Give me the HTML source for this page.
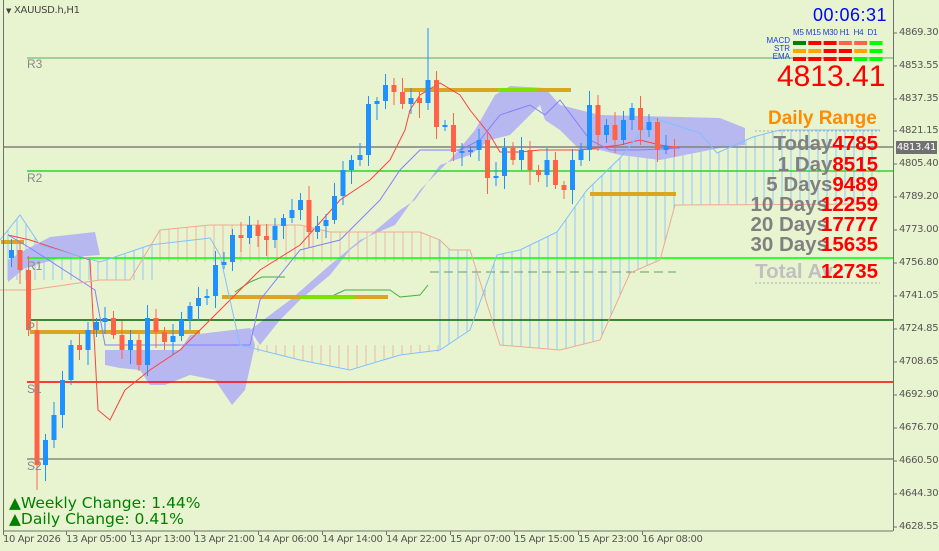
<!DOCTYPE html>
<html><head><meta charset="utf-8"><style>
html,body{margin:0;padding:0;background:#e8f4d0;}
#w{position:relative;width:939px;height:551px;overflow:hidden;background:#e8f4d0;font-family:"Liberation Sans",sans-serif;}
.t{position:absolute;white-space:nowrap;}
.ax{position:absolute;left:899px;font-size:10px;color:#555;font-family:"DejaVu Sans",sans-serif;letter-spacing:-0.3px}
.dt{position:absolute;top:534px;font-size:10px;color:#555;font-family:"DejaVu Sans",sans-serif;letter-spacing:-0.4px}
.dr{position:absolute;right:61px;font-weight:bold;font-size:20.5px;white-space:nowrap;}
.dr .g{color:#808080}.dr .r{color:#ff0000}
</style></head><body><div id="w">
<svg id="s" width="939" height="551" style="position:absolute;left:0;top:0">
</svg>
<div class="t" style="left:6px;top:5px;font-size:10px;color:#444;font-family:'DejaVu Sans',sans-serif;letter-spacing:-0.3px"><span style="font-size:7px">&#9660;</span> XAUUSD.h,H1</div>
<div class="t" style="left:27px;top:57px;font-size:12px;color:#888">R3</div>
<div class="t" style="left:27px;top:171px;font-size:12px;color:#888">R2</div>
<div class="t" style="left:27px;top:259px;font-size:12px;color:#888">R1</div>
<div class="t" style="left:27px;top:320px;font-size:12px;color:#888">P</div>
<div class="t" style="left:27px;top:382px;font-size:12px;color:#888">S1</div>
<div class="t" style="left:27px;top:459px;font-size:12px;color:#888">S2</div>
<div class="t" style="left:813px;top:5px;font-size:18px;color:#0000ff;letter-spacing:0.5px">00:06:31</div>
<div class="t" style="left:793px;top:28px;font-size:8px;color:#2040d0;letter-spacing:-0.2px">M5 M15 M30 H1 &nbsp;H4 &nbsp;D1</div>
<div class="t" style="left:762px;top:37px;font-size:8px;color:#2040d0;line-height:8px;text-align:right;width:28px">MACD<br>STR<br>EMA</div>
<div class="t" style="left:777px;top:60px;font-size:30px;color:#ff0000">4813.41</div>
<div class="t" style="left:768px;top:108px;font-size:19px;font-weight:bold;color:#ff8c00">Daily Range</div>
<div class="dr" style="top:132px"><span class="g">Today</span><span class="r">4785</span></div>
<div class="dr" style="top:153px"><span class="g">1 Day</span><span class="r">8515</span></div>
<div class="dr" style="top:173px"><span class="g">5 Days</span><span class="r">9489</span></div>
<div class="dr" style="top:193px"><span class="g">10 Days</span><span class="r" style="margin-left:-7px">12259</span></div>
<div class="dr" style="top:213px"><span class="g">20 Days</span><span class="r" style="margin-left:-7px">17777</span></div>
<div class="dr" style="top:233px"><span class="g">30 Days</span><span class="r" style="margin-left:-7px">15635</span></div>
<div class="dr" style="top:260px"><span style="color:#c0c0c0">Total Av</span><span class="r" style="margin-left:-12px">12735</span></div>
<div class="t" style="left:9px;top:495px;font-size:15.5px;color:#008000;font-family:'DejaVu Sans',sans-serif;line-height:16px">&#9650;Weekly Change: 1.44%<br>&#9650;Daily Change: 0.41%</div>
<div class="ax" style="top:27px">4869.30</div><div class="ax" style="top:60px">4853.55</div><div class="ax" style="top:93px">4837.35</div><div class="ax" style="top:125px">4821.15</div><div class="ax" style="top:158px">4805.40</div><div class="ax" style="top:191px">4789.20</div><div class="ax" style="top:224px">4773.00</div><div class="ax" style="top:257px">4756.80</div><div class="ax" style="top:290px">4741.05</div><div class="ax" style="top:323px">4724.85</div><div class="ax" style="top:356px">4708.65</div><div class="ax" style="top:389px">4692.90</div><div class="ax" style="top:422px">4676.70</div><div class="ax" style="top:455px">4660.50</div><div class="ax" style="top:488px">4644.30</div><div class="ax" style="top:521px">4628.55</div>
<div class="t" style="left:896px;top:141px;width:41px;height:13px;background:#707070;color:#fff;font-size:10px;font-family:'DejaVu Sans',sans-serif;line-height:13px;text-align:center;letter-spacing:-0.3px">4813.41</div>
<div class="dt" style="left:3px">10 Apr 2026</div><div class="dt" style="left:66px">13 Apr 05:00</div><div class="dt" style="left:130px">13 Apr 13:00</div><div class="dt" style="left:194px">13 Apr 21:00</div><div class="dt" style="left:258px">14 Apr 06:00</div><div class="dt" style="left:322px">14 Apr 14:00</div><div class="dt" style="left:386px">14 Apr 22:00</div><div class="dt" style="left:450px">15 Apr 07:00</div><div class="dt" style="left:514px">15 Apr 15:00</div><div class="dt" style="left:578px">15 Apr 23:00</div><div class="dt" style="left:642px">16 Apr 08:00</div>
</div>
<script>
var s=document.getElementById('s'),h='';
function L(x1,y1,x2,y2,c,w,d){h+='<line x1="'+x1+'" y1="'+y1+'" x2="'+x2+'" y2="'+y2+'" stroke="'+c+'" stroke-width="'+(w||1)+'"'+(d?' stroke-dasharray="'+d+'"':'')+'/>';}
function P(pts,c,w){h+='<polyline fill="none" stroke="'+c+'" stroke-width="'+(w||1)+'" points="'+pts+'"/>';}
function G(pts,c){h+='<polygon fill="'+c+'" points="'+pts+'"/>';}
function hatch(x1,x2,step,top,bot,c){for(var x=x1;x<=x2;x+=step){L(x,top(x),x,bot(x),c);}}
function interp(arr){return function(x){for(var i=0;i<arr.length-1;i++){if(x>=arr[i][0]&&x<=arr[i+1][0]){var t=(x-arr[i][0])/(arr[i+1][0]-arr[i][0]);return arr[i][1]+t*(arr[i+1][1]-arr[i][1]);}}return arr[arr.length-1][1];};}
var lb=[[0,240],[20,215],[40,245],[100,262],[150,245],[210,238],[220,255],[240,345],[300,360],[350,370],[400,355],[440,350],[470,330],[497,255],[520,250],[557,232],[587,190],[620,158],[653,118],[700,133],[717,153],[753,137],[780,130],[880,130]];
var sal=[[0,290],[30,290],[100,280],[130,280],[160,230],[180,228],[210,225],[300,225],[330,232],[420,232],[440,240],[450,250],[470,250],[500,345],[560,350],[600,340],[630,273],[660,260],[675,205],[880,204]];
var lbf=interp(lb),sf=interp(sal);
hatch(160,440,9,function(x){return Math.min(sf(x),255)},function(x){return 262},'#f0b8a0');
hatch(8,160,9,function(x){return lbf(x)},function(x){return 280},'#90c8ff');
hatch(440,880,9,function(x){return lbf(x)},function(x){return sf(x)},'#90c8ff');
hatch(240,440,9,function(x){return 345},function(x){return Math.max(lbf(x),352)},'#f0b8a0');
var cc='#b8b8f0';
G('8,260 25,250 50,237 95,232 100,255 60,258 25,268 8,282',cc);
G('105,350 180,350 190,335 250,328 255,345 245,390 232,405 215,380 190,375 165,385 150,385 140,370 120,368 105,365',cc);
G('250,330 290,300 330,265 360,240 395,225 420,190 450,160 475,130 495,95 510,86 545,88 560,105 600,115 720,118 745,128 745,145 720,148 700,152 660,160 620,155 600,150 580,150 560,130 545,120 540,105 510,135 490,140 470,155 440,165 415,200 400,210 370,235 350,250 330,275 300,300 280,320 260,345',cc);
L(27,58,893,58,'#50b060');L(27,171,893,171,'#30d030',1.5);L(27,258,893,258,'#00ff00',1.5);L(27,320,893,320,'#006400',1.5);L(27,382,893,382,'#ff0000',1.5);L(27,459,893,459,'#555',1);
L(3,147,893,147,'#808080',1.5);
L(430,272,676,272,'#60a060',1,'9,5');
P('235,292 250,282 262,277 285,277','#40b040');P('330,297 345,290 390,290 400,297 420,295 428,285','#40b040');
L(1,242,24,242,'#daa520',4);L(30,332,200,332,'#daa520',4);L(222,297,388,297,'#daa520',4);L(300,297,355,297,'#80e000',4);L(404,90,571,90,'#daa520',4);L(498,90,537,90,'#80e000',4);L(590,194,676,194,'#daa520',4);
P('8,235 30,240 60,250 90,260 98,410 110,420 125,390 150,370 180,350 220,310 260,270 300,245 340,200 370,180 390,160 405,130 410,110 420,95 440,83 460,95 470,110 490,135 500,152 520,152 540,150 580,150 620,145 640,140 660,145 680,148','#ff4040');
P('8,235 30,248 95,290 105,345 160,345 250,345 260,300 300,250 340,240 380,200 400,170 420,150 460,150 480,140 500,115 530,105 545,115 560,100 590,140 610,150 640,150 680,148','#8080ff');
P(lb.map(function(p){return p.join(',')}).join(' '),'#80c0ff');
P(sal.map(function(p){return p.join(',')}).join(' '),'#f0a890');
var cl=[258,250,270,330,465,440,415,380,345,350,330,322,318,335,350,340,365,318,332,342,336,320,306,298,296,265,262,235,238,225,236,240,226,218,210,200,232,226,220,196,170,160,155,104,101,85,92,104,98,103,80,127,125,152,151,150,140,178,176,148,160,150,170,175,160,185,190,160,150,105,135,125,140,120,108,130,122,150,146,148];
for(var i=1;i<cl.length;i++){var x=3+i*8.5,o=cl[i-1],c=cl[i],up=c<o,col=up?'#1e90ff':'#ff6347';
var t=Math.min(o,c),b=Math.max(o,c);var hh=t-(4+(i*7)%11),ll=b+(4+(i*5)%13);
if(i==50)hh=28;if(i==4)ll=490;
L(x,hh,x,ll,col);h+='<rect x="'+(x-2.5)+'" y="'+t+'" width="5" height="'+Math.max(b-t,2)+'" fill="'+col+'"/>';}
L(3.5,0,3.5,531,'#707070');L(3,531,893,531,'#707070');L(893.5,0,893.5,531,'#707070');
[33,66,99,131,164,197,230,263,296,329,362,395,428,461,494,527].forEach(function(y){L(893,y,897,y,'#707070');});
[3,66,130,194,258,322,386,450,514,578,642].forEach(function(x){L(x+0.5,531,x+0.5,535,'#707070');});
var cols=[['#008000','#ff0000','#ff0000','#ff6347','#ff6347','#00ff00'],['#ffa500','#ffa500','#ff0000','#ff0000','#ffa500','#00ff00'],['#ff0000','#ff0000','#ff0000','#ff0000','#00ff00','#00ff00']];
for(var r=0;r<3;r++)for(var k=0;k<6;k++)h+='<rect x="'+(793+k*15.3)+'" y="'+(41+r*8)+'" width="13" height="4" fill="'+cols[r][k]+'"/>';
L(755,131,880,131,'#b0b0b0',1,'2,2');L(755,283,880,283,'#b0b0b0',1,'2,2');
s.innerHTML=h;
</script>
</body></html>
